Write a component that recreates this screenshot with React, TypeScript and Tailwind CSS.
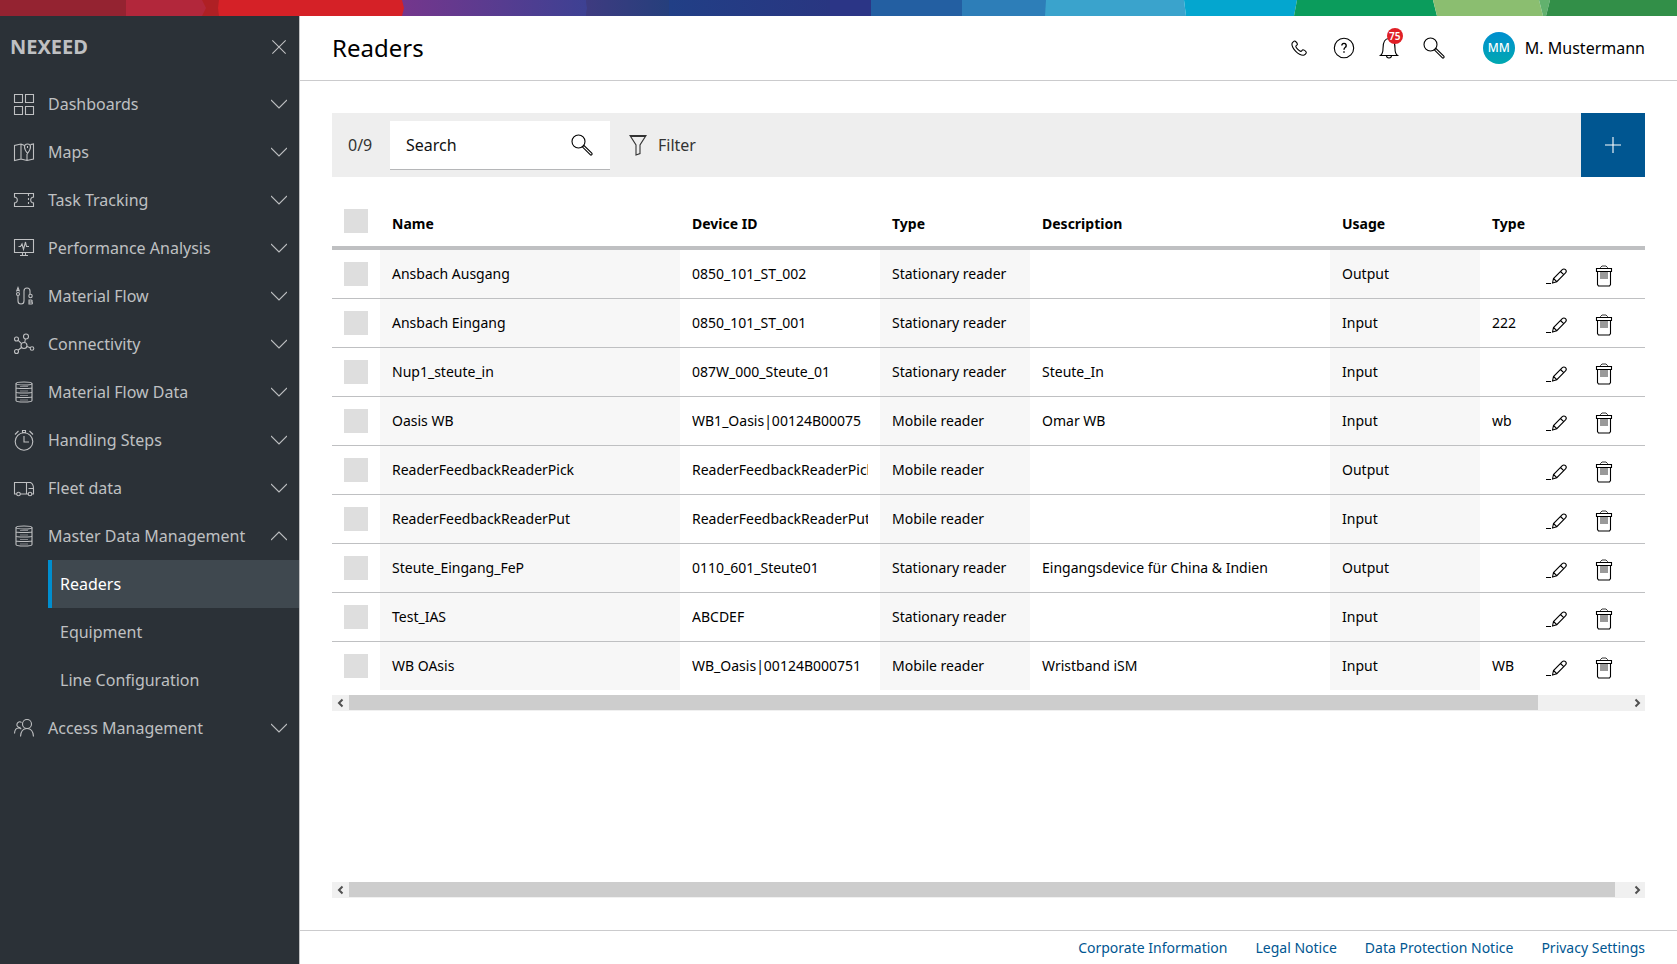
import type { ReactNode } from 'react';

interface Reader {
  name: string;
  deviceId: string;
  readerType: string;
  description: string;
  usage: string;
  type: string;
}

const readers: Reader[] = [
  { name: 'Ansbach Ausgang', deviceId: '0850_101_ST_002', readerType: 'Stationary reader', description: '', usage: 'Output', type: '' },
  { name: 'Ansbach Eingang', deviceId: '0850_101_ST_001', readerType: 'Stationary reader', description: '', usage: 'Input', type: '222' },
  { name: 'Nup1_steute_in', deviceId: '087W_000_Steute_01', readerType: 'Stationary reader', description: 'Steute_In', usage: 'Input', type: '' },
  { name: 'Oasis WB', deviceId: 'WB1_Oasis|00124B00075', readerType: 'Mobile reader', description: 'Omar WB', usage: 'Input', type: 'wb' },
  { name: 'ReaderFeedbackReaderPick', deviceId: 'ReaderFeedbackReaderPick', readerType: 'Mobile reader', description: '', usage: 'Output', type: '' },
  { name: 'ReaderFeedbackReaderPut', deviceId: 'ReaderFeedbackReaderPut', readerType: 'Mobile reader', description: '', usage: 'Input', type: '' },
  { name: 'Steute_Eingang_FeP', deviceId: '0110_601_Steute01', readerType: 'Stationary reader', description: 'Eingangsdevice für China & Indien', usage: 'Output', type: '' },
  { name: 'Test_IAS', deviceId: 'ABCDEF', readerType: 'Stationary reader', description: '', usage: 'Input', type: '' },
  { name: 'WB OAsis', deviceId: 'WB_Oasis|00124B000751', readerType: 'Mobile reader', description: 'Wristband iSM', usage: 'Input', type: 'WB' },
];

interface IconProps {
  children: ReactNode;
  className?: string;
}

function Icon({ children, className = 'size-6' }: IconProps) {
  return (
    <svg viewBox="0 0 24 24" fill="none" stroke="currentColor" strokeWidth="1.1" className={`shrink-0 ${className}`} aria-hidden="true">
      {children}
    </svg>
  );
}

const databaseIcon = (
  <>
    <ellipse cx="12" cy="3.500" rx="8" ry="1.500" />
    <path d="M4 3.500v17c0 .8 3.600 1.500 8 1.500s8-.7 8-1.500v-17M4 7.500c0 .6 3.600 1 8 1s8-.4 8-1M4 12c0 .6 3.600 1 8 1s8-.4 8-1M4 16.500c0 .6 3.600 1 8 1s8-.4 8-1" />
    <path d="M8 6.500h8M8 11h8M8 15.500h8M8 20h8" strokeWidth="0.600" />
  </>
);

const menu = [
  {
    label: 'Dashboards',
    icon: <path d="M2.500 2.500h8v8h-8zM13.500 2.500h8v8h-8zM2.500 14.500h8v8h-8zM13.500 14.500h8v8h-8z" />,
  },
  {
    label: 'Maps',
    icon: (
      <path d="M12.500 5.500 9 4 2.500 5.500v15L9 19l6 1.500 6.500-1.500V4l-3 .6M9 4v15M15 14v6.500M15.500 13.500s-3-4-3-6.500a3 3 0 0 1 6 0c0 2.500-3 6.500-3 6.500zM15.500 6v2" />
    ),
  },
  {
    label: 'Task Tracking',
    icon: (
      <>
        <path d="M2.500 5.500h19v3.500l-1.500.5a3 3 0 0 0 0 5l1.500.5v3.500h-19v-3.500l1.500-.5a3 3 0 0 0 0-5l-1.500-.5z" />
        <path d="M16.500 6v13" strokeDasharray="2 2" />
      </>
    ),
  },
  {
    label: 'Performance Analysis',
    icon: (
      <>
        <path d="M2.500 3.500h19v13h-19zM10.500 16.500v3M13.500 16.500v3M8 19.500h8" />
        <path d="M6.500 10.500h2L10 8l1.500 5.500L13.500 6l1 4.500h2.500" />
      </>
    ),
  },
  {
    label: 'Material Flow',
    icon: (
      <>
        <path d="m4.500 7.500 1.500-4 1.500 4M5 6.500h2M6 11.500V17a3 3 0 0 0 6 0V7a3 3 0 0 1 6 0v3M17 16h2.200a1 1 0 0 1 0 2H17zM17 18h2.500a1 1 0 0 1 0 2H17z" />
        <circle cx="6" cy="10" r="1.500" />
        <circle cx="18.500" cy="12" r="1.700" />
      </>
    ),
  },
  {
    label: 'Connectivity',
    icon: (
      <>
        <circle cx="12" cy="13.500" r="3" />
        <circle cx="14" cy="4.500" r="2.500" />
        <circle cx="4.500" cy="7" r="2" />
        <circle cx="4.500" cy="19.500" r="2" />
        <circle cx="20" cy="16.500" r="1.800" />
        <path d="m12.700 10.500.7-3.500M9.500 11.700 6.200 8.300M9.500 15.500l-3.500 2.800M15 14.500l3.300 1.300" />
      </>
    ),
  },
  { label: 'Material Flow Data', icon: databaseIcon },
  {
    label: 'Handling Steps',
    icon: (
      <>
        <circle cx="12" cy="13.500" r="8.800" />
        <path d="M12 8v6h5M3 6.500 6.500 3M21 6.500 17.500 3M10.500 2.500h3v2h-3z" />
      </>
    ),
  },
  {
    label: 'Fleet data',
    icon: (
      <>
        <path d="M5 18H2.500V6.500h16c2 1 3 3.500 3 6V18H20M8 18h8.500M14.500 6.500V18M16.500 12.500h5" />
        <circle cx="6.500" cy="18" r="1.800" />
        <circle cx="18" cy="18" r="1.800" />
      </>
    ),
  },
  {
    label: 'Master Data Management',
    icon: databaseIcon,
    children: ['Readers', 'Equipment', 'Line Configuration'],
  },
  {
    label: 'Access Management',
    icon: (
      <>
        <circle cx="15" cy="8" r="4.500" />
        <path d="M8.500 20.500c.3-5 2.800-8 6.500-8s6.200 3 6.500 8M2.500 17.500c.2-3.500 1.500-5.500 4-5.500 1.200 0 2 .4 2.800 1.200M8.500 11.300A2.800 2.800 0 1 1 9.500 6.500" />
      </>
    ),
  },
];

function SearchIcon() {
  return (
    <Icon>
      <circle cx="8.500" cy="8.500" r="6.500" />
      <path d="m12.300 13.800 1.500-1.500 8 7.800a1.100 1.100 0 0 1-1.600 1.600z" />
    </Icon>
  );
}

function Sidebar() {
  return (
    <aside className="w-[300px] shrink-0 border-r border-[#c1c2c4] bg-[#2b3137] text-[#bfc0c2]">
      <div className="flex h-16 items-center justify-between pr-3 pb-0.5 pl-2.5">
        <span className="text-xl font-bold">NEXEED</span>
        <button type="button" aria-label="Close menu">
          <Icon className="size-4">
            <path d="m2 2 20 20M22 2 2 22" strokeWidth="1.600" />
          </Icon>
        </button>
      </div>
      <nav>
        {menu.map((item) => (
          <div key={item.label}>
            <button type="button" className="flex h-12 w-full items-center px-3 text-left">
              <Icon>{item.icon}</Icon>
              <span className="ml-3 flex-1 text-base">{item.label}</span>
              <Icon className="size-4">
                <path d={item.children ? 'm0 18 12-12 12 12' : 'm0 6 12 12 12-12'} strokeWidth="1.600" />
              </Icon>
            </button>
            {item.children?.map((child) => (
              <a
                key={child}
                href="#"
                className={
                  child === 'Readers'
                    ? 'ml-12 flex h-12 items-center border-l-4 border-[#008ecf] bg-[#3f484f] pl-2 text-base text-white'
                    : 'ml-12 flex h-12 items-center border-l-4 border-transparent pl-2 text-base'
                }
              >
                {child}
              </a>
            ))}
          </div>
        ))}
      </nav>
    </aside>
  );
}

function Header() {
  return (
    <header className="flex h-[65px] items-center border-b border-[#cbcbcd] px-8">
      <h1 className="flex-1 text-2xl">Readers</h1>
      <div className="flex items-center gap-[21px]">
        <button type="button" aria-label="Call">
          <Icon>
            <path d="M8.300 5.200c.7.500 2 2.300 2.100 3 .1.900-1.700 1.400-1.600 2.200.2 1.500 3.500 4.800 5 5 .9.100 1.300-1.700 2.200-1.600.8.100 2.700 1.500 3.200 2.200.7 1-1.700 3.300-3.100 3.300C11.500 19.300 4.900 12.500 4.900 8.100c0-1.400 2.400-3.600 3.400-2.900z" />
          </Icon>
        </button>
        <button type="button" aria-label="Help">
          <Icon>
            <circle cx="12" cy="12" r="9.700" />
            <path d="M9.800 9.500a2.200 2.200 0 1 1 3.300 2c-.8.500-1.100.9-1.100 2.200M12 15.200v1.500" strokeWidth="1.400" />
          </Icon>
        </button>
        <button type="button" aria-label="Notifications" className="relative">
          <Icon>
            <path d="M3.500 19.500h17c-2-1.500-2.500-3-2.500-7 0-5-1-10-6-10s-6 5-6 10c0 4-.5 5.500-2.500 7zM9.500 19.500a2.500 2.500 0 0 0 5 0" />
          </Icon>
          <span className="absolute -top-2 left-2.5 flex size-4 items-center justify-center rounded-full bg-[#e01f26] text-[10px] font-semibold text-white">
            75
          </span>
        </button>
        <button type="button" aria-label="Search">
          <SearchIcon />
        </button>
      </div>
      <button type="button" className="ml-[37px] flex items-center gap-2.5">
        <span className="flex size-8 items-center justify-center rounded-full bg-linear-to-b from-[#008ecf] to-[#00a8b0] text-xs font-medium text-white">
          MM
        </span>
        <span className="text-base">M. Mustermann</span>
      </button>
    </header>
  );
}

function Toolbar() {
  return (
    <div className="flex h-16 items-center bg-[#eeeeee] pl-4">
      <span className="w-[42px] text-base text-[#333]">0/9</span>
      <label className="flex h-[49px] w-[220px] items-center border-b border-[#b5b6b8] bg-white pr-4 pl-4">
        <input type="text" aria-label="Search readers" placeholder="Search" className="min-w-0 flex-1 text-base outline-none placeholder:text-[#111]" />
        <SearchIcon />
      </label>
      <button type="button" className="ml-4 flex items-center gap-2 text-base text-[#333]">
        <Icon>
          <path d="M4 2.500h16l-6 9.500v8.500l-4 1.500V12zM4.500 3.500h15" />
        </Icon>
        Filter
      </button>
      <button type="button" aria-label="Add reader" className="ml-auto flex size-16 items-center justify-center bg-[#005691] text-white">
        <Icon>
          <path d="M4 12h16M12 4v16" />
        </Icon>
      </button>
    </div>
  );
}

function Checkbox({ label }: { label: string }) {
  return <input type="checkbox" aria-label={label} className="mx-3 block size-6 appearance-none bg-[#dedede] checked:bg-[#005691]" />;
}

function ReaderRow({ reader }: { reader: Reader }) {
  return (
    <tr className="h-[49px] *:border-b *:border-[#bfc0c2] last:h-12 last:*:border-b-0">
      <td>
        <Checkbox label={`Select ${reader.name}`} />
      </td>
      <td className="bg-[#f7f7f7] px-3">{reader.name}</td>
      <td className="px-3">
        <div className="overflow-hidden whitespace-nowrap">{reader.deviceId}</div>
      </td>
      <td className="bg-[#f7f7f7] px-3">{reader.readerType}</td>
      <td className="px-3">{reader.description}</td>
      <td className="bg-[#f7f7f7] px-3">{reader.usage}</td>
      <td className="px-3">{reader.type}</td>
      <td>
        <div className="flex gap-6 pt-1">
          <button type="button" aria-label={`Edit ${reader.name}`}>
            <Icon>
              <path d="M2 19.500h5M8.500 19l1-4.500 8.800-8.800a2.200 2.200 0 0 1 3.200 3.200L12.800 17.700zM9.500 14.500l3.300 3.200M16.500 7.500l3.200 3.200" />
            </Icon>
          </button>
          <button type="button" aria-label={`Delete ${reader.name}`}>
            <Icon>
              <path d="M4.500 4.500h15v3h-15zM5.500 7.500v13l1 1.500h11l1-1.500v-13" />
              <path d="M8.500 4.500v-1l1.500-1.500h4l1.500 1.500v1zM9 8v7M11 8v7M13 8v7M15 8v7" strokeWidth="0.800" />
            </Icon>
          </button>
        </div>
      </td>
    </tr>
  );
}

function ReaderTable() {
  return (
    <table className="w-full table-fixed border-separate border-spacing-0 text-left text-sm">
      <colgroup>
        <col className="w-12" />
        <col className="w-[300px]" />
        <col className="w-[200px]" />
        <col className="w-[150px]" />
        <col className="w-[300px]" />
        <col className="w-[150px]" />
        <col />
        <col className="w-[101px]" />
      </colgroup>
      <thead>
        <tr className="h-[50px] *:border-b-4 *:border-[#bfc0c2]">
          <th className="pb-1">
            <Checkbox label="Select all readers" />
          </th>
          <th className="px-3 pt-0.5">Name</th>
          <th className="px-3 pt-0.5">Device ID</th>
          <th className="px-3 pt-0.5">Type</th>
          <th className="px-3 pt-0.5">Description</th>
          <th className="px-3 pt-0.5">Usage</th>
          <th className="px-3 pt-0.5">Type</th>
          <th aria-label="Actions" />
        </tr>
      </thead>
      <tbody>
        {readers.map((reader) => (
          <ReaderRow key={reader.name} reader={reader} />
        ))}
      </tbody>
    </table>
  );
}

function ScrollBar({ size }: { size: number }) {
  return (
    <div className="flex h-4 bg-[#f0f0f0] text-[#505050]">
      <button type="button" aria-label="Scroll left" className="flex w-[17px] items-center justify-center">
        <Icon className="size-3">
          <path d="m15 5-7 7 7 7" strokeWidth="4" />
        </Icon>
      </button>
      <div className="flex-1">
        <div className="h-[15px] bg-[#cdcdcd]" style={{ width: `${size}%` }} />
      </div>
      <button type="button" aria-label="Scroll right" className="flex w-[17px] items-center justify-center">
        <Icon className="size-3">
          <path d="m9 5 7 7-7 7" strokeWidth="4" />
        </Icon>
      </button>
    </div>
  );
}

const links = ['Corporate Information', 'Legal Notice', 'Data Protection Notice', 'Privacy Settings'];

function ColorStripe() {
  return (
    <svg viewBox="0 0 1677 16" preserveAspectRatio="none" className="block h-4 w-full" aria-hidden="true">
      <defs>
        <linearGradient id="violet">
          <stop offset="0" stopColor="#75368c" />
          <stop offset="1" stopColor="#3d4193" />
        </linearGradient>
        <linearGradient id="navy">
          <stop offset="0" stopColor="#3e3b80" />
          <stop offset="1" stopColor="#253f7c" />
        </linearGradient>
        <linearGradient id="blue">
          <stop offset="0" stopColor="#213f86" />
          <stop offset="1" stopColor="#293681" />
        </linearGradient>
      </defs>
      <path fill="#942331" d="M0 0h126v16H0z" />
      <path fill="#af2024" d="M200 0h30v16h-30z" />
      <path fill="#b2273b" d="M126 0h76l4 8-4 8h-76z" />
      <path fill="#3e3b80" d="M580 0h20v16h-20z" />
      <path fill="url(#violet)" d="M400 0h186l1 8-1 8H400z" />
      <path fill="#d52127" d="M219 0h183l2 8-2 8H219l-1-8z" />
      <path fill="url(#navy)" d="M586 0h84v16h-84l1-8z" />
      <path fill="url(#blue)" d="M669 0h161v16H669z" />
      <path fill="#2b3586" d="M830 0h42v16h-42z" />
      <path fill="#235fa2" d="M871 0h91v16h-91z" />
      <path fill="#2d7eb8" d="M962 0h84v16h-84z" />
      <path fill="#3aa3cc" d="M1046 0h138l2 16h-141z" />
      <path fill="#04a6cf" d="M1184 0h113l-3 16h-108z" />
      <path fill="#0b9c5c" d="M1297 0h136l4 16h-143z" />
      <path fill="#8bbe70" d="M1433 0h106l4 16h-106z" />
      <path fill="#62b16e" d="M1539 0h11l-4 16h-3z" />
      <path fill="#328f48" d="M1550 0h127v16h-131z" />
    </svg>
  );
}

export default function App() {
  return (
    <div className="flex min-h-screen flex-col bg-white font-['Noto_Sans',sans-serif] text-black">
      <ColorStripe />
      <div className="flex flex-1">
        <Sidebar />
        <div className="flex min-w-0 flex-1 flex-col">
          <Header />
          <main className="flex flex-1 flex-col p-8">
            <Toolbar />
            <div className="mt-[23px] mb-[5px]">
              <ReaderTable />
            </div>
            <ScrollBar size={93} />
            <div className="mt-auto">
              <ScrollBar size={99} />
            </div>
          </main>
          <footer className="flex h-[34px] items-center justify-end gap-7 border-t border-[#cbcbcd] px-8 text-sm text-[#005691]">
            {links.map((link) => (
              <a key={link} href="#">
                {link}
              </a>
            ))}
          </footer>
        </div>
      </div>
    </div>
  );
}
